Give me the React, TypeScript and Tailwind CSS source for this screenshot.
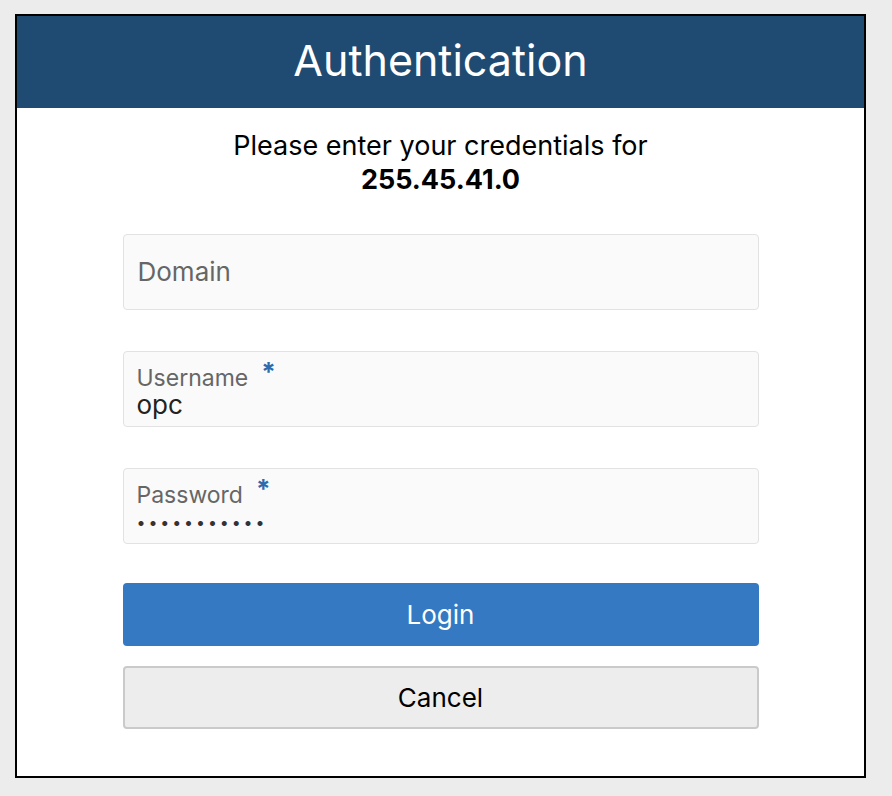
import React from 'react';

const font = { fontFamily: 'Inter, "Liberation Sans", Arial, sans-serif' };

function Field({ label, value, required, secret }: { label: string; value?: string; required?: boolean; secret?: boolean }) {
  if (value === undefined) {
    return (
      <div className="flex h-[76px] items-center rounded-[4px] border border-[#e2e2e2] bg-[#fafafa] pl-[14px]">
        <span className="text-[26px] leading-[28px] text-[#666666]">{label}</span>
      </div>
    );
  }
  return (
    <div className="flex h-[76px] flex-col rounded-[4px] border border-[#e2e2e2] bg-[#fafafa] pl-[13px] pt-[13px]">
      <div className="flex items-start text-[23px] leading-[26px] text-[#666666]">
        <span>{label}</span>
        <span className="ml-[13px] -mt-[4px] text-[26px] font-bold leading-[22px] text-[#2c6cae]">{required ? '*' : ''}</span>
      </div>
      {secret ? (
        <div className="text-[16px] leading-[28px] tracking-[2.9px] text-[#333333]">{value}</div>
      ) : (
        <div className="text-[26px] leading-[28px] text-[#222222]">{value}</div>
      )}
    </div>
  );
}

export default function App() {
  return (
    <div className="min-h-[796px] bg-[#ececec] pl-[15px] pt-[14px]" style={font}>
      <div className="flex h-[764px] w-[851px] flex-col border-2 border-black bg-white">
        <div className="flex h-[92px] items-center justify-center bg-[#1f4a72]">
          <h1 className="-mt-[4px] text-[43px] leading-none text-white">Authentication</h1>
        </div>
        <div className="mt-[21px] text-center text-[27px] leading-[34px] text-black">
          <div>Please enter your credentials for</div>
          <div className="font-bold">255.45.41.0</div>
        </div>
        <div className="mx-auto mt-[37px] flex w-[636px] flex-col">
          <Field label="Domain" />
          <div className="mt-[41px]">
            <Field label="Username" value="opc" required />
          </div>
          <div className="mt-[41px]">
            <Field label="Password" value="•••••••••••" required secret />
          </div>
          <button className="mt-[39px] h-[63px] rounded-[4px] bg-[#3479c1] text-[26px] text-white">Login</button>
          <button className="mt-[20px] h-[63px] rounded-[4px] border-2 border-[#cacaca] bg-[#ededed] text-[26px] text-black">Cancel</button>
        </div>
      </div>
    </div>
  );
}
